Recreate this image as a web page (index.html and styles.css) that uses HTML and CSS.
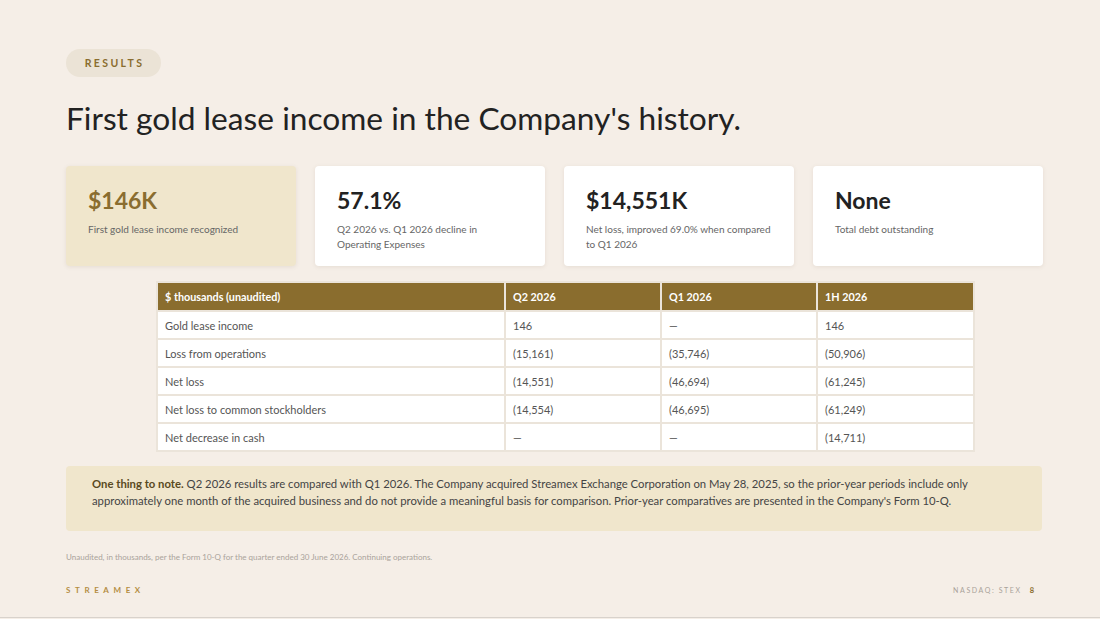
FILE: index.html
```html
<!DOCTYPE html>
<html>
<head>
<meta charset="utf-8">
<link rel="stylesheet" href="styles.css">
</head>
<body>
<div class="slide">
  <div class="pill">RESULTS</div>
  <h1 class="title">First gold lease income in the Company's history.</h1>
  <div class="cards">
    <div class="card card-gold">
      <div class="value value-gold">$146K</div>
      <div class="desc">First gold lease income recognized</div>
    </div>
    <div class="card">
      <div class="value">57.1%</div>
      <div class="desc">Q2 2026 vs. Q1 2026 decline in<br>Operating Expenses</div>
    </div>
    <div class="card">
      <div class="value">$14,551K</div>
      <div class="desc">Net loss, improved 69.0% when compared<br>to Q1 2026</div>
    </div>
    <div class="card">
      <div class="value">None</div>
      <div class="desc">Total debt outstanding</div>
    </div>
  </div>
  <div class="table-wrap">
    <table class="fin">
      <thead>
        <tr><th class="c1">$ thousands (unaudited)</th><th class="c2">Q2 2026</th><th class="c3">Q1 2026</th><th>1H 2026</th></tr>
      </thead>
      <tbody>
        <tr><td>Gold lease income</td><td>146</td><td>—</td><td>146</td></tr>
        <tr><td>Loss from operations</td><td>(15,161)</td><td>(35,746)</td><td>(50,906)</td></tr>
        <tr><td>Net loss</td><td>(14,551)</td><td>(46,694)</td><td>(61,245)</td></tr>
        <tr><td>Net loss to common stockholders</td><td>(14,554)</td><td>(46,695)</td><td>(61,249)</td></tr>
        <tr><td>Net decrease in cash</td><td>—</td><td>—</td><td>(14,711)</td></tr>
      </tbody>
    </table>
  </div>
  <div class="note"><span class="note-lead">One thing to note.</span> Q2 2026 results are compared with Q1 2026. The Company acquired Streamex Exchange Corporation on May 28, 2025, so the prior-year periods include only approximately one month of the acquired business and do not provide a meaningful basis for comparison. Prior-year comparatives are presented in the Company's Form 10-Q.</div>
  <div class="foot">Unaudited, in thousands, per the Form 10-Q for the quarter ended 30 June 2026. Continuing operations.</div>
  <div class="footer">
    <div class="brand">STREAMEX</div>
    <div class="right"><span class="ticker">NASDAQ: STEX</span><span class="page">8</span></div>
  </div>
</div>
</body>
</html>
```
FILE: styles.css
```css
html, body {
  margin: 0;
  padding: 0;
  background: #f5eee7;
}
body {
  font-family: Lato, "Open Sans", sans-serif;
  color: #222;
}
.slide {
  width: 1100px;
  height: 618px;
  box-sizing: border-box;
  border-bottom: 1px solid #d8d2cc;
  padding: 49px 58px 0 66px;
  display: flex;
  flex-direction: column;
  align-items: flex-start;
}
.pill {
  height: 28px;
  width: 95px;
  box-sizing: border-box;
  border-radius: 14px;
  background: #ebe3d6;
  color: #8a6d2f;
  font-size: 10.5px;
  font-weight: 700;
  letter-spacing: 2.4px;
  display: flex;
  align-items: center;
  justify-content: center;
  padding-left: 2px;
}
.title {
  margin: 21px 0 0 0;
  font-size: 31.7px;
  font-weight: 400;
  color: #222;
  line-height: 40px;
  letter-spacing: 0;
}
.cards {
  margin-top: 28px;
  display: grid;
  grid-template-columns: repeat(4, 230px);
  column-gap: 19px;
  width: 976px;
}
.card {
  height: 100px;
  box-sizing: border-box;
  background: #fff;
  border-radius: 4px;
  box-shadow: 0 1px 4px rgba(120, 100, 70, 0.12);
  padding: 19px 22px 0 22px;
}
.card-gold {
  background: #f0e6cc;
}
.value {
  font-size: 23px;
  font-weight: 700;
  color: #222;
  line-height: 30px;
}
.value-gold {
  color: #8a6d2f;
}
.desc {
  margin-top: 7px;
  font-size: 10px;
  line-height: 15px;
  color: #666;
  white-space: nowrap;
}
.table-wrap {
  margin-top: 15px;
  margin-left: 90px;
}
.fin {
  border-collapse: collapse;
  width: 819px;
  font-size: 11px;
  background: #fff;
  border: 2px solid #ebe4da;
}
.fin th {
  background: #8a6d2e;
  color: #fff;
  font-weight: 700;
  font-size: 10.8px;
  text-align: left;
  height: 27px;
  padding: 0 7px;
  border-left: 2px solid #ebe4da;
}
.fin th:first-child, .fin td:first-child { border-left: none; }
.fin .c1 { width: 332px; }
.fin .c2 { width: 140px; }
.fin .c3 { width: 140px; }
.fin td {
  height: 26px;
  padding: 0 7px;
  color: #555;
  border-top: 2px solid #ebe4da;
  border-left: 2px solid #ebe4da;
}
.note {
  margin-top: 14px;
  width: 976px;
  height: 65px;
  box-sizing: border-box;
  background: #f0e6cc;
  border-radius: 4px;
  padding: 9px 26px 0 26px;
  font-size: 11.3px;
  line-height: 17px;
  color: #444;
}
.note-lead {
  font-weight: 700;
  color: #5a4a22;
}
.foot {
  margin-top: 21px;
  font-size: 8px;
  color: #aaa39b;
}
.footer {
  margin-top: 23px;
  width: 976px;
  display: flex;
  justify-content: space-between;
  align-items: center;
}
.brand {
  font-size: 8px;
  font-weight: 700;
  color: #b48d43;
  letter-spacing: 4.6px;
}
.right {
  display: flex;
  align-items: center;
  padding-right: 8px;
}
.ticker {
  font-size: 7px;
  letter-spacing: 1.6px;
  color: #a9a29a;
}
.page {
  margin-left: 8px;
  font-size: 7.5px;
  font-weight: 700;
  color: #8a6d2f;
}
```
